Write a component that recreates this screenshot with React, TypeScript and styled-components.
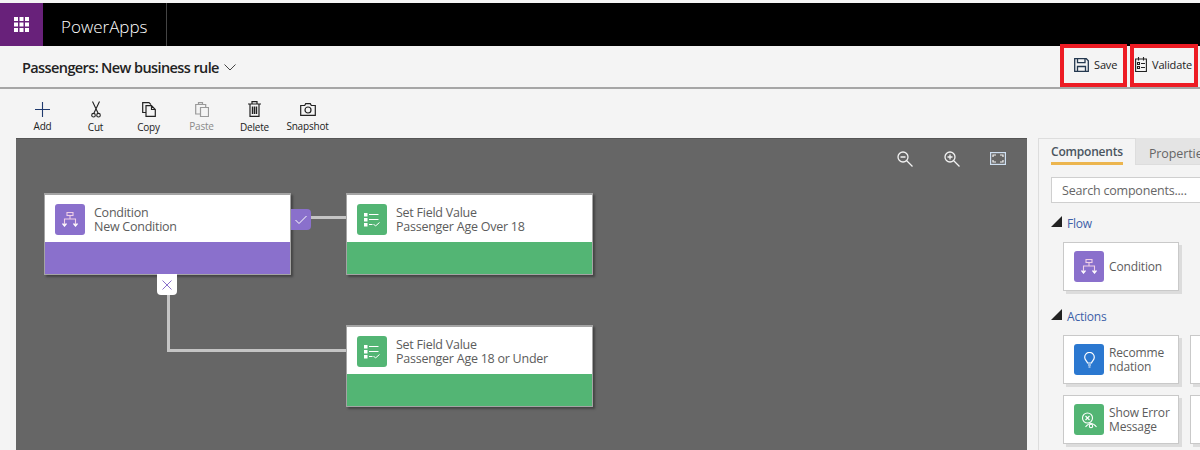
import React from "react";
import styled, { createGlobalStyle } from "styled-components";

const Global = createGlobalStyle`
  html, body { margin: 0; padding: 0; background: #fff; }
  body { font-family: "Open Sans", "Noto Sans", sans-serif; overflow: hidden; }
  * { box-sizing: border-box; }
`;

const Page = styled.div`
  width: 1200px;
  height: 450px;
  display: flex;
  flex-direction: column;
  overflow: hidden;
  background: #f4f4f4;
`;

const TopBar = styled.div`
  margin-top: 3px;
  flex: none;
  height: 43px;
  background: #000;
  display: flex;
`;

const Waffle = styled.div`
  width: 43px;
  background: #68217a;
  display: flex;
  align-items: center;
  justify-content: center;
`;

const Brand = styled.div`
  width: 124px;
  border-right: 1px solid #444;
  color: #fff;
  font-size: 17px;
  font-weight: 300;
  line-height: 47px;
  padding-left: 18px;
`;

const TitleBar = styled.div`
  height: 43px;
  flex: none;
  border-bottom: 2px solid #a6a6a6;
  display: flex;
  align-items: center;
  justify-content: space-between;
  padding-left: 22px;
  padding-right: 2px;
`;

const Title = styled.div`
  display: flex;
  align-items: center;
  font-size: 14.5px;
  font-weight: 600;
  color: #222;
  letter-spacing: -0.6px;
  padding-top: 2px;
`;

const TitleGap = styled.span`
  width: 3px;
`;

const Chevron = styled.svg`
  margin-left: 5px;
`;

const Actions = styled.div`
  display: flex;
  gap: 3px;
  align-self: flex-start;
  margin-top: -2px;
`;

const ActionButton = styled.div<{ $w: number; $pad: number }>`
  width: ${(p) => p.$w}px;
  height: 43px;
  border: 4px solid #ed1c24;
  display: flex;
  align-items: center;
  padding: 0 0 2px ${(p) => p.$pad}px;
  gap: 5px;
  font-size: 11px;
  color: #222;
  letter-spacing: -0.15px;
`;

const Toolbar = styled.div`
  height: 49px;
  flex: none;
  display: flex;
  padding-left: 16px;
`;

const Tool = styled.div<{ $off?: boolean }>`
  width: 53px;
  display: flex;
  flex-direction: column;
  align-items: center;
  padding-top: 10px;
  color: ${(p) => (p.$off ? "#8a8a8a" : "#222")};
  font-size: 10px;
  line-height: 14px;
  letter-spacing: -0.2px;
`;

const ToolIcon = styled.div<{ $low?: boolean }>`
  height: 20px;
  display: flex;
  align-items: center;
  justify-content: center;
  margin-bottom: ${(p) => (p.$low ? 1 : 0)}px;
`;

const Main = styled.div`
  flex: 1;
  display: flex;
  padding-left: 16px;
  min-height: 0;
`;

const Canvas = styled.div`
  width: 1011px;
  background: #666;
  position: relative;
  flex: none;
  border-top: 1px solid #555;
`;

const CanvasTools = styled.div`
  position: absolute;
  right: 21px;
  top: 12px;
  display: flex;
  gap: 30.5px;
`;

const FitIcon = styled.svg`
  margin-top: 1px;
`;

const Node = styled.div<{ $x: number; $y: number }>`
  position: absolute;
  left: ${(p) => p.$x}px;
  top: ${(p) => p.$y}px;
  width: 247px;
  height: 82px;
  border: 1px solid #a4a4a4;
  border-top-width: 2px;
  box-shadow: 2px 2px 2px #444;
  display: flex;
  flex-direction: column;
  background: #fff;
`;

const NodeHead = styled.div`
  height: 47px;
  flex: none;
  display: flex;
  align-items: center;
  padding: 2px 0 0 10px;
  gap: 9px;
`;

const NodeBand = styled.div<{ $c: string }>`
  flex: 1;
  background: ${(p) => p.$c};
`;

const NodeText = styled.div`
  font-size: 12.5px;
  line-height: 14px;
  color: #5c5c5c;
  letter-spacing: -0.25px;
  white-space: nowrap;
`;

const Badge = styled.div<{ $c: string }>`
  width: 30px;
  height: 31px;
  border-radius: 3px;
  background: ${(p) => p.$c};
  flex: none;
  display: flex;
  align-items: center;
  justify-content: center;
`;

const Port = styled.div<{ $x: number; $y: number; $c: string; $r: string }>`
  position: absolute;
  left: ${(p) => p.$x}px;
  top: ${(p) => p.$y}px;
  width: 20px;
  height: 21px;
  border-radius: ${(p) => p.$r};
  background: ${(p) => p.$c};
  display: flex;
  align-items: center;
  justify-content: center;
`;

const Wire = styled.div<{ $x: number; $y: number; $w: number; $h: number }>`
  position: absolute;
  left: ${(p) => p.$x}px;
  top: ${(p) => p.$y}px;
  width: ${(p) => p.$w}px;
  height: ${(p) => p.$h}px;
  background: #c4c4c4;
`;

const Panel = styled.div`
  flex: 1;
  padding-left: 11px;
  min-width: 0;
  overflow: hidden;
  display: flex;
  flex-direction: column;
`;

const Tabs = styled.div`
  display: flex;
  height: 27px;
  flex: none;
`;

const ActiveTab = styled.div`
  width: 99px;
  border: 1px solid #ddd;
  border-bottom: none;
  padding: 4px 12px 0;
  font-size: 12px;
  font-weight: 600;
  color: #4a5560;
  letter-spacing: -0.2px;
  background: #f4f4f4;
`;

const TabLabel = styled.div`
  border-bottom: 3px solid #ecb54e;
  height: 22px;
  white-space: nowrap;
`;

const IdleTab = styled.div`
  flex: 1;
  background: #e4e4e4;
  padding: 7px 0 0 13px;
  font-size: 12.5px;
  color: #666;
  white-space: nowrap;
  border-bottom: 1px solid #ddd;
  letter-spacing: -0.1px;
`;

const PanelBody = styled.div`
  flex: 1;
  border-left: 1px solid #ddd;
  padding: 12px 0 0 12px;
`;

const Search = styled.div`
  height: 26px;
  width: 160px;
  border: 1px solid #cfcfcf;
  background: #fff;
  font-size: 12.5px;
  line-height: 26px;
  padding-left: 10px;
  color: #666;
  letter-spacing: -0.2px;
`;

const Section = styled.div<{ $top: number }>`
  display: flex;
  align-items: center;
  gap: 5px;
  margin-top: ${(p) => p.$top}px;
  height: 16px;
  font-size: 12px;
  color: #3d5fa8;
  letter-spacing: -0.2px;
`;

const Tri = styled.div`
  width: 11px;
  height: 11px;
  margin-top: -3px;
  background: #222;
  clip-path: polygon(100% 0, 100% 100%, 0 100%);
`;

const CardRow = styled.div<{ $top: number }>`
  display: flex;
  gap: 11px;
  margin-top: ${(p) => p.$top}px;
  padding-left: 12px;
  width: 180px;
`;

const Card = styled.div`
  width: 116px;
  height: 49px;
  flex: none;
  background: #fff;
  border: 1px solid #c9c9c9;
  box-shadow: 3px 3px 0 #dcdcdc;
  display: flex;
  align-items: center;
  padding-left: 10px;
  gap: 5px;
`;

const CardText = styled.div`
  font-size: 12px;
  line-height: 13.5px;
  color: #5c5c5c;
  letter-spacing: -0.15px;
  white-space: nowrap;
`;

const FlowIcon = () => (
  <svg width="16" height="15" viewBox="0 0 16 15" fill="none" stroke="#fff" strokeWidth="1.1">
    <rect x="5" y=".5" width="6" height="3" stroke="#f0cfe6" />
    <path d="M8 3.5V7M2.5 13V7h11v6" stroke="#f0cfe6" />
    <path d="M.5 11.5 2.5 14l2-2.5M11.5 11.5l2 2.5 2-2.5" strokeWidth="1.3" />
  </svg>
);

const ListCheckIcon = () => (
  <svg width="16" height="14" viewBox="0 0 16 14" fill="none" stroke="#fff" strokeWidth="1">
    <rect x=".5" y=".5" width="2.5" height="2.5" fill="#fff" />
    <rect x=".5" y="5.5" width="2.5" height="2.5" fill="#fff" />
    <rect x=".5" y="10.5" width="2.5" height="2.5" fill="#fff" />
    <path d="M5 1.5h9.5M5 6.5h9.5M5 11.5h3.5M9.5 11l2 2 4-3.5" />
  </svg>
);

const NodeCard = ({ x, y, color, icon, l1, l2 }: { x: number; y: number; color: string; icon: React.ReactNode; l1: string; l2: string }) => (
  <Node $x={x} $y={y}>
    <NodeHead>
      <Badge $c={color}>{icon}</Badge>
      <NodeText>{l1}<br />{l2}</NodeText>
    </NodeHead>
    <NodeBand $c={color} />
  </Node>
);

const SaveIcon = () => (
  <svg width="15" height="14" viewBox="0 0 15 14" fill="none" stroke="#24384f" strokeWidth="1.3">
    <path d="M.7.7h11.6l2 2v10.6H.7z" />
    <path d="M3.5.7v4H11v-4M3.5 13.300V8.500h8v4.800" />
  </svg>
);

const ValidateIcon = () => (
  <svg width="12" height="15" viewBox="0 0 12 15" fill="none" stroke="#222" strokeWidth="1.1">
    <path d="M.6 2h10.800v12.500H.6z" />
    <path d="M3.5 0v3.500M8.500 0v3.500M2.500 5.500h2v2h-2zM6 6.500h4M2.500 9.500h2v2h-2zM6 10.500h4" />
  </svg>
);

const Magnifier = ({ plus }: { plus?: boolean }) => (
  <svg width="16" height="16" viewBox="0 0 16 16" fill="none" stroke="#f2f2f2" strokeWidth="1.3">
    <circle cx="6" cy="6" r="5" />
    <path d="M9.500 9.500 15.500 15.500M3.500 6h5" />
    {plus && <path d="M6 3.500v5" />}
  </svg>
);

const tools: { label: string; off?: boolean; low?: boolean; icon: React.ReactNode }[] = [
  {
    label: "Add",
    icon: (
      <svg width="15" height="15" viewBox="0 0 15 15" stroke="#1f3a6e" strokeWidth="1.1">
        <path d="M7.500 0v15M0 7.500h15" />
      </svg>
    ),
  },
  {
    label: "Cut",
    low: true,
    icon: (
      <svg width="10" height="17" viewBox="0 0 10 17" fill="none" stroke="#222" strokeWidth="1.1">
        <path d="M1.500.5 7 12M8.500.5 3 12" />
        <circle cx="2.500" cy="14.200" r="1.800" />
        <circle cx="7.500" cy="14.200" r="1.800" />
      </svg>
    ),
  },
  {
    label: "Copy",
    low: true,
    icon: (
      <svg width="14" height="15" viewBox="0 0 14 15" fill="none" stroke="#222" strokeWidth="1.2">
        <path d="M4 10.500H.7V.7h6.300l2 2" />
        <path d="M4 3.700h5.500l3.800 3.800v6.800H4zM9.500 3.700v3.800h3.800" />
      </svg>
    ),
  },
  {
    label: "Paste",
    off: true,
    icon: (
      <svg width="14" height="15" viewBox="0 0 14 15" fill="none" stroke="#9a9a9a" strokeWidth="1.2">
        <path d="M5 12H.7V2.500h10V5" />
        <path d="M3.500 2.500V.7h4v1.800M5.500 5.500h8v9h-8z" />
      </svg>
    ),
  },
  {
    label: "Delete",
    low: true,
    icon: (
      <svg width="13" height="16" viewBox="0 0 13 16" fill="none" stroke="#222" strokeWidth="1.2">
        <path d="M0 3h13M4 3V.7h5V3M2 3v12.300h9V3" />
        <path d="M4.500 5.500V13M6.500 5.500V13M8.500 5.500V13" strokeWidth="1.4" />
      </svg>
    ),
  },
  {
    label: "Snapshot",
    icon: (
      <svg width="16" height="13" viewBox="0 0 16 13" fill="none" stroke="#222" strokeWidth="1.2">
        <path d="M.7 2.500h4l1-1.800h4.600l1 1.800h4v9.800H.7z" />
        <circle cx="8" cy="7" r="3" />
      </svg>
    ),
  },
];

const App: React.FC = () => {
  return (
    <Page>
      <Global />
      <TopBar>
        <Waffle>
          <svg width="15" height="15" viewBox="0 0 15 15" fill="#fff">
            {[0, 5.5, 11].flatMap((y) =>
              [0, 5.5, 11].map((x) => <rect key={`${x}-${y}`} x={x} y={y} width="4" height="4" />)
            )}
          </svg>
        </Waffle>
        <Brand>PowerApps</Brand>
      </TopBar>
      <TitleBar>
        <Title>
          Passengers:<TitleGap />New business rule
          <Chevron width="12" height="7" viewBox="0 0 12 7" fill="none" stroke="#444">
            <path d="M.5.5 6 6 11.500.5" />
          </Chevron>
        </Title>
        <Actions>
          <ActionButton $w={67} $pad={10}>
            <SaveIcon />
            Save
          </ActionButton>
          <ActionButton $w={68} $pad={1}>
            <ValidateIcon />
            Validate
          </ActionButton>
        </Actions>
      </TitleBar>
      <Toolbar>
        {tools.map((t) => (
          <Tool key={t.label} $off={t.off}>
            <ToolIcon $low={t.low}>{t.icon}</ToolIcon>
            {t.label}
          </Tool>
        ))}
      </Toolbar>
      <Main>
        <Canvas>
          <CanvasTools>
            <Magnifier />
            <Magnifier plus />
            <FitIcon width="16" height="13" viewBox="0 0 16 13" fill="none" stroke="#f2f2f2" strokeWidth="1.2">
              <rect x=".6" y=".6" width="14.800" height="11.800" stroke="#cfe0f2" />
              <path d="M3 5V3h3M10 3h3v2M3 8v2h3M10 10h3V8" />
            </FitIcon>
          </CanvasTools>
          <Wire $x={295} $y={77} $w={36} $h={3} />
          <Wire $x={151} $y={150} $w={3} $h={63} />
          <Wire $x={151} $y={210} $w={180} $h={3} />
          <NodeCard x={28} y={54} color="#8a70cc" icon={<FlowIcon />} l1="Condition" l2="New Condition" />
          <NodeCard x={330} y={54} color="#53b574" icon={<ListCheckIcon />} l1="Set Field Value" l2="Passenger Age Over 18" />
          <NodeCard x={330} y={186} color="#53b574" icon={<ListCheckIcon />} l1="Set Field Value" l2="Passenger Age 18 or Under" />
          <Port $x={275} $y={70} $c="#8a70cc" $r="0 4px 4px 0">
            <svg width="12" height="10" viewBox="0 0 12 10" fill="none" stroke="#fff">
              <path d="M.5 5 4 8.500 11.500 1" />
            </svg>
          </Port>
          <Port $x={141} $y={135} $c="#fff" $r="0 0 4px 4px">
            <svg width="10" height="10" viewBox="0 0 10 10" fill="none" stroke="#8a70cc">
              <path d="M.5.5l9 9M9.500.5l-9 9" />
            </svg>
          </Port>
        </Canvas>
        <Panel>
          <Tabs>
            <ActiveTab>
              <TabLabel>Components</TabLabel>
            </ActiveTab>
            <IdleTab>Properties</IdleTab>
          </Tabs>
          <PanelBody>
            <Search>Search components....</Search>
            <Section $top={12}>
              <Tri />
              Flow
            </Section>
            <CardRow $top={11}>
              <Card>
                <Badge $c="#8a70cc"><FlowIcon /></Badge>
                <CardText>Condition</CardText>
              </Card>
            </CardRow>
            <Section $top={17}>
              <Tri />
              Actions
            </Section>
            <CardRow $top={11}>
              <Card>
                <Badge $c="#2b78d0">
                  <svg width="11" height="16" viewBox="0 0 11 16" fill="none" stroke="#fff" strokeWidth="1.2">
                    <path d="M3.500 11C3 9 .7 8 .7 5.200a4.800 4.800 0 0 1 9.600 0C10.300 8 8 9 7.500 11zM4 13h3M4.500 15h2" />
                  </svg>
                </Badge>
                <CardText>Recomme<br />ndation</CardText>
              </Card>
              <Card />
            </CardRow>
            <CardRow $top={11}>
              <Card>
                <Badge $c="#53b574">
                  <svg width="18" height="18" viewBox="0 0 18 18" fill="none" stroke="#fff" strokeWidth="1.1">
                    <circle cx="7.500" cy="7" r="5" />
                    <path d="M5.500 5l4 4M9.500 5l-4 4" />
                    <path d="M5.500 16Q11 9 16.500 16" />
                    <circle cx="11" cy="15" r="1.700" />
                  </svg>
                </Badge>
                <CardText>Show Error<br />Message</CardText>
              </Card>
              <Card />
            </CardRow>
          </PanelBody>
        </Panel>
      </Main>
    </Page>
  );
};

export default App;
